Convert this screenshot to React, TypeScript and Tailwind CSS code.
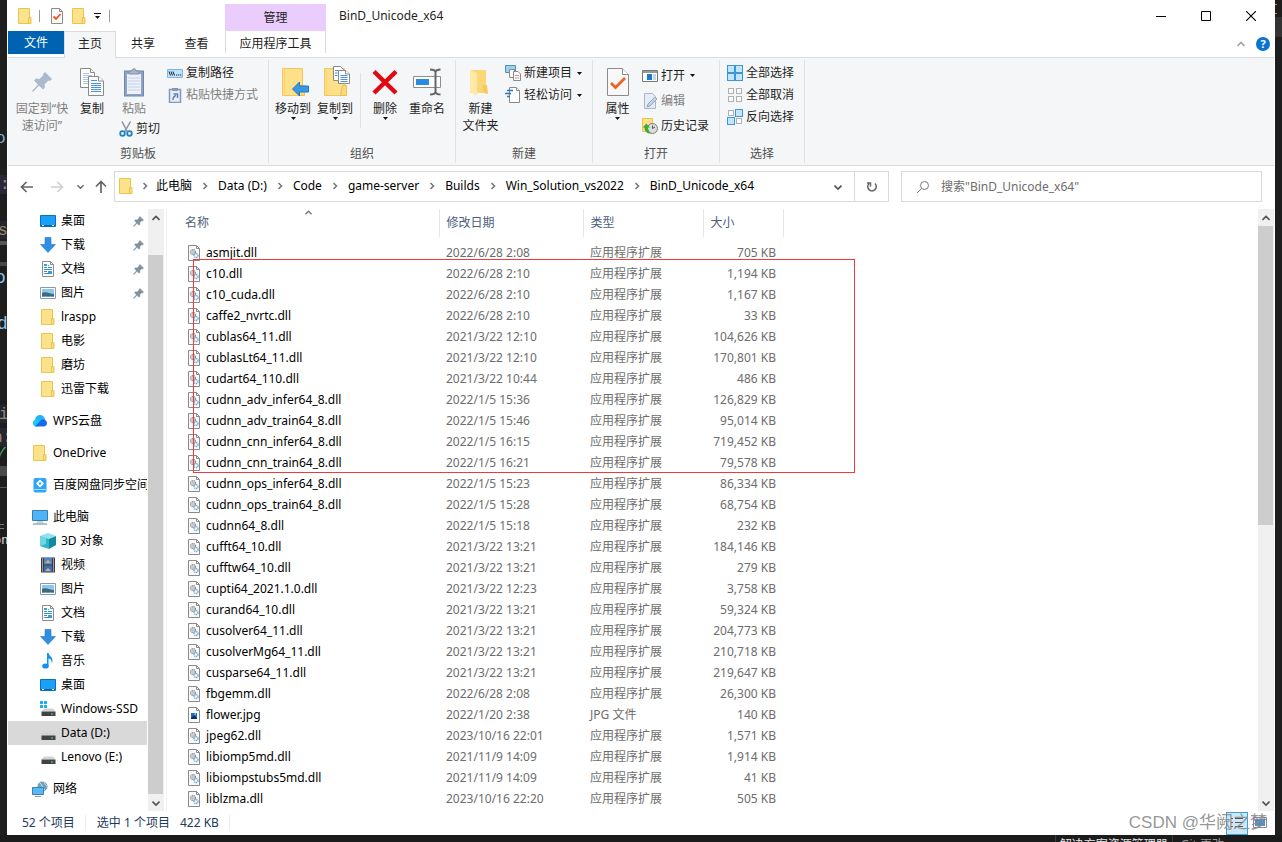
import type { ReactNode } from "react";

type IconProps = { className?: string };

/* ── Icons ────────────────────────────────────────────── */

const Folder = ({ className = "h-4 w-4" }: IconProps) => (
  <svg viewBox="0 0 16 16" className={className}>
    <path d="M1.500.5h11v15h-11z" fill="#fde28c" stroke="#e9c44f" />
    <path d="M11.500 9.500h2.500v6h-3.500l1-1.500z" fill="#fbdc7c" stroke="#e9c44f" />
  </svg>
);

const CheckPage = ({ className = "h-4 w-4" }: IconProps) => (
  <svg viewBox="0 0 16 16" className={className}>
    <path d="M2.500.5h8l3 3v12h-11z" fill="#f9f9f9" stroke="#8c8c8c" />
    <path d="M10.500.5v3h3" fill="none" stroke="#8c8c8c" />
    <path d="M4.500 8.500l2.500 2.500 4.500-5" fill="none" stroke="#e8561e" strokeWidth="1.800" />
  </svg>
);

const Caret = ({ className = "h-[3px] w-[5px]" }: IconProps) => (
  <svg viewBox="0 0 5 3" className={className}><path d="M0 0h5L2.500 3z" fill="#111" /></svg>
);

const Chevron = ({ dir, className = "h-2 w-2 text-[#505050]" }: IconProps & { dir: "up" | "down" | "right" }) => (
  <svg viewBox="0 0 8 8" className={className} fill="none" stroke="currentColor" strokeWidth="1.600">
    {dir === "up" && <path d="M.5 6L4 2.500 7.500 6" />}
    {dir === "down" && <path d="M.5 2.500L4 6l3.500-3.500" />}
    {dir === "right" && <path d="M2.500 1L5.500 4l-3 3" />}
  </svg>
);

const BigPin = () => (
  <svg viewBox="0 0 22 22" className="h-[22px] w-[22px]" fill="#a9bacd">
    <path d="M14 1l7 7-2 2-1.500-.5-4 4 .5 3-2 2-4-4L2 21l-1-1 6-6.500-4-4 2-2 3.500.5 4-4L12 3z" />
  </svg>
);

const SmallPin = () => (
  <svg viewBox="0 0 22 22" className="h-[11px] w-[11px]" fill="#7f909f" stroke="#7f909f">
    <path d="M14 1l7 7-2 2-1.500-.5-4 4 .5 3-2 2-4-4L2 21l-1-1 6-6.500-4-4 2-2 3.500.5 4-4L12 3z" />
  </svg>
);

const CopyIcon = () => (
  <svg viewBox="0 0 26 30" className="h-[30px] w-[26px]" fill="#fff" stroke="#8a8a8a">
    <path d="M1.500 1.500h10l4 4v15h-14z" />
    <path d="M11.500 1.500v4h4" />
    <path d="M4 6.500h6M4 8.500h9M4 10.500h6M4 12.500h5M4 14.500h5M4 16.500h5" stroke="#a9c8ef" />
    <path d="M9.500 9.500h10l5 4.500v14.500h-15z" />
    <path d="M19.500 9.500v4.500h5" />
    <path d="M12 13.500h6M12 16.500h10M12 18.500h10M12 20.500h10M12 22.500h10M12 24.500h10" stroke="#4a8fe6" />
  </svg>
);

const PasteIcon = () => (
  <svg viewBox="0 0 22 30" className="h-[30px] w-[22px]">
    <rect x="1.500" y="4" width="19" height="25" fill="#8ba3c6" stroke="#7088ae" />
    <path d="M4 7h14v20H4z" fill="#edf2f9" />
    <path d="M5 11h12M5 14h12M5 17h12M5 20h12M5 23h12" stroke="#c3d0e2" />
    <path d="M6 7V4h3c0-3 4-3 4 0h3v3z" fill="#a8b6ca" stroke="#8090aa" />
  </svg>
);

const CutIcon = () => (
  <svg viewBox="0 0 14 16" className="h-4 w-[14px]" fill="none">
    <path d="M3 .5L8.500 11M11.500.5L5.500 11" stroke="#8b9099" strokeWidth="1.500" />
    <circle cx="3.500" cy="12.500" r="2.300" stroke="#1c84c6" strokeWidth="1.800" />
    <circle cx="10.500" cy="12.500" r="2.300" stroke="#1c84c6" strokeWidth="1.800" />
  </svg>
);

const PathIcon = () => (
  <svg viewBox="0 0 16 16" className="h-4 w-4">
    <path d="M.5 4.500h15v8H.5z" fill="#bfe2fb" stroke="#7db6de" />
    <path d="M2 6.500l1.500 4M4 6.500l1.500 4M6 6.500l1.500 4" stroke="#222" />
    <path d="M9 10h1.200M11 10h1.200M13 10h1.200" stroke="#222" strokeWidth="1.200" />
  </svg>
);

const PasteShortcut = () => (
  <svg viewBox="0 0 16 16" className="h-4 w-4">
    <path d="M2.500 2.500h11v13h-11z" fill="#e8eef7" stroke="#8298bc" strokeWidth="1.500" />
    <path d="M5 1h6v3H5z" fill="#8298bc" />
    <path d="M6 13c0-3 1-4 3-4.500M6.500 7H10.500v4" fill="none" stroke="#6480ad" strokeWidth="1.500" />
  </svg>
);

const BigFolder = ({ children }: { children?: ReactNode }) => (
  <svg viewBox="-4 1 32 32" className="h-8 w-8 shrink-0">
    <path d="M1.500 3.500h20v27h-20z" fill="#fee08a" stroke="#efc95d" />
    <path d="M3.500 4v26" stroke="#fbd26d" />
    <path d="M19.500 20.500h4v10h-6z" fill="#fbd978" stroke="#e9c152" />
    {children}
  </svg>
);

const MoveTo = () => (
  <BigFolder><path d="M11.500 24l7-7v4h9v6h-9v4z" fill="#3798e4" stroke="#2478bf" /></BigFolder>
);

const CopyTo = () => (
  <BigFolder>
    <g fill="#fff" stroke="#8a8a8a">
      <path d="M10.500 1.500h7l3 3v11h-10z" />
      <path d="M15.500 5.500h7l4 3.500v9.500h-11z" />
      <path d="M22.500 5.500V9h4" />
      <path d="M17.500 10.500h7M17.500 12.500h7M17.500 14.500h7M17.500 16.500h7M12 5.500h3M12 8h2.500M12 10.500h2.500" stroke="#4a8fe6" />
    </g>
  </BigFolder>
);

const DeleteIcon = () => (
  <svg viewBox="0 0 28 28" className="h-7 w-7"><path d="M3 3.500L25 25M25 3.500L3 25" stroke="#e30613" strokeWidth="4.500" /></svg>
);

const RenameIcon = () => (
  <svg viewBox="0 0 28 28" className="h-7 w-7" fill="none">
    <path d="M.5 8.500h27v11H.5z" fill="#fff" stroke="#8f8f8f" />
    <path d="M3 11h13v6H3z" fill="#2b8be0" />
    <path d="M17 1.500c3 0 5 .5 5.500 2.500.500-2 2-2.500 5-2.500M22.500 3.500v21M17 26.500c3 0 5-.5 5.500-2.500.500 2 2 2.500 5 2.500" stroke="#666" strokeWidth="2" />
  </svg>
);

const NewFolder = () => (
  <svg viewBox="2 0 24 30" className="h-[30px] w-6">
    <path d="M3 3h16v23H3z" fill="#fbd775" />
    <path d="M3 3l7 3v23l-7-4z" fill="#ffe9a6" />
    <path d="M15 18h5l1 9-4-1z" fill="#f5c95c" />
  </svg>
);

const NewItem = () => (
  <svg viewBox="0 0 16 16" className="h-4 w-4" fill="#fff" stroke="#8a8a8a">
    <path d="M.5.5h10v7H.5z" fill="#9fd0f2" stroke="#4f92bd" />
    <path d="M4.500 4.500h5v8h-5z" />
    <path d="M8.500 6.500h4.500l2.500 2.500v6.500h-7z" />
    <path d="M10 10.500h4M10 13h4" stroke="#e58a8a" />
  </svg>
);

const EasyAccess = () => (
  <svg viewBox="0 0 16 16" className="h-4 w-4" fill="#fff">
    <path d="M4.500.5h7l3 3v12h-10z" stroke="#8a8a8a" />
    <path d="M11.500.5v3h3" stroke="#8a8a8a" />
    <path d="M2 3.500h6M0 6.500h6M2 9.500h3" stroke="#2a78bd" strokeWidth="1.500" />
  </svg>
);

const Properties = () => (
  <svg viewBox="0 0 22 30" className="h-[30px] w-[22px]">
    <path d="M.5 1.500h15l6 6v21H.5z" fill="#f8f8f8" stroke="#8c8c8c" />
    <path d="M15.500 1.500v6h6" fill="#fff" stroke="#8c8c8c" />
    <path d="M4 16l4.500 4.500L18 11" fill="none" stroke="#f0611d" strokeWidth="2.800" />
  </svg>
);

const OpenIcon = () => (
  <svg viewBox="0 0 16 16" className="h-4 w-4">
    <path d="M.5 2.500h15v11H.5z" fill="#fff" stroke="#777" />
    <path d="M1 4h14" stroke="#999" strokeWidth="2" />
    <path d="M5 6h5v6H5z" fill="#1979ca" />
    <path d="M11 7h3M11 9h3M11 11h3" stroke="#8aaac8" />
  </svg>
);

const EditIcon = () => (
  <svg viewBox="0 0 16 16" className="h-4 w-4">
    <path d="M2.500.5h8l3 3v12h-11z" fill="#e6ecf6" stroke="#a8b6cc" />
    <path d="M5 14l1-3 7-7 2 2-7 7z" fill="#c4d2e6" stroke="#93a8c6" />
  </svg>
);

const HistoryIcon = () => (
  <svg viewBox="0 0 16 16" className="h-4 w-4">
    <path d="M.5.500h10v13H.5z" fill="#fce08a" stroke="#e9c44f" />
    <circle cx="10.500" cy="10.500" r="5" fill="#dcdcdc" stroke="#7d7d7d" />
    <path d="M10.500 7.500v3l2.500-1.500" fill="none" stroke="#555" />
    <path d="M9 15.500c-4 0-6.500-2-6.500-6H.8L4.300 5.500 8 9.500H6c0 2.500 1 4 3 6z" fill="#3faa36" />
  </svg>
);

const SelectIcon = ({ on }: { on: boolean[] }) => (
  <svg viewBox="0 0 16 16" className="h-4 w-4">
    {on.map((lit, i) => (
      <rect
        key={i}
        x={(i % 2) * 8 + (lit ? 0.5 : 1.5)}
        y={Math.floor(i / 2) * 8 + (lit ? 0.5 : 1.5)}
        width={lit ? 7 : 5}
        height={lit ? 7 : 5}
        fill={lit ? "#c5e5fb" : "#fbfbfb"}
        stroke={lit ? "#3a97dd" : "#b0b0b0"}
      />
    ))}
  </svg>
);

const Desktop = () => (
  <svg viewBox="0 0 16 16" className="h-4 w-4">
    <path d="M.5 2.500h15v11H.5z" fill="#1aa0fb" stroke="#0c72b8" />
    <path d="M1 12.500h14" stroke="#0b5f9e" />
    <path d="M2 12.500h2M12 12.500h2" stroke="#fff" />
  </svg>
);

const Download = () => (
  <svg viewBox="0 0 16 16" className="h-4 w-4"><path d="M5 .5h6v7h4.500L8 15.500.5 7.500H5z" fill="#2f8fe4" stroke="#2a79c0" strokeWidth=".6" /></svg>
);

const Document = () => (
  <svg viewBox="0 0 16 16" className="h-4 w-4">
    <path d="M2.500.5h8l3 3v12h-11z" fill="#fff" stroke="#8a8a8a" />
    <path d="M10.500.5v3h3" fill="none" stroke="#8a8a8a" />
    <path d="M4 6.500h3M8 6.500h4M4 8.500h8M4 10.500h3M4 12.500h8M8 4.500h1" stroke="#2c93cf" />
    <path d="M8 10h4v2H8zM4 3h3v2H4z" fill="#3f9fd8" />
  </svg>
);

const Picture = () => (
  <svg viewBox="0 0 16 16" className="h-4 w-4">
    <path d="M.5 2.500h15v11H.5z" fill="#fff" stroke="#8e9aa5" />
    <path d="M2 4h12v8H2z" fill="#8dc6f2" />
    <path d="M2 8c4-2 7 1 12 1v3H2z" fill="#3d6d73" />
    <path d="M2 11h12v1H2z" fill="#5fa3d6" />
  </svg>
);

const Wps = () => (
  <svg viewBox="0 0 16 16" className="h-4 w-4">
    <circle cx="8" cy="7" r="5" fill="#20b6f5" />
    <circle cx="4.500" cy="10" r="3.500" fill="#16cbe8" />
    <path d="M3 13.500L9 7c3-2 6 1 6 3s-1.500 3.500-3.500 3.500z" fill="#1668ee" />
  </svg>
);

const Baidu = () => (
  <svg viewBox="0 0 16 16" className="h-4 w-4">
    <rect x="1.500" y="1" width="13" height="14.500" rx="2" fill="#2fa4fb" />
    <path d="M8 2.500l4 4-4 4-4-4zM8 5L6.500 6.500 8 8l1.500-1.500z" fill="#fff" fillRule="evenodd" />
    <path d="M2 12.500h12" stroke="#a9dcff" />
  </svg>
);

const Computer = () => (
  <svg viewBox="0 0 16 16" className="h-4 w-4">
    <path d="M.5 1.500h15v10H.5z" fill="#4fb4f7" stroke="#3b7fae" />
    <path d="M5 13h6" stroke="#8aa0b0" />
    <path d="M1 15h14" stroke="#7c93a5" strokeWidth="1.200" />
  </svg>
);

const Cube = () => (
  <svg viewBox="0 0 16 16" className="h-4 w-4">
    <path d="M0 3l8-3 8 3-7 3z" fill="#8fe3ec" />
    <path d="M0 3l9 3v10L0 13z" fill="#2bb5c8" />
    <path d="M9 6l7-3v9l-7 4z" fill="#118a9e" />
    <path d="M0 3l6 2v6l-6 2z" fill="#6fd5e0" />
  </svg>
);

const Video = () => (
  <svg viewBox="0 0 16 16" className="h-4 w-4">
    <path d="M1 .5h14v15H1z" fill="#3c3c3c" />
    <path d="M4 1h8v6.500H4z" fill="#4b86d8" />
    <path d="M4 8.500h8V15H4z" fill="#3a6fc6" />
    <path d="M5 6l3-3 3 3zM5 14l3-3 3 3z" fill="#e8b43a" />
    <path d="M2.500 1.500v14M13.500 1.500v14" stroke="#fff" strokeDasharray="1 1" />
  </svg>
);

const Music = () => (
  <svg viewBox="0 0 16 16" className="h-4 w-4" fill="#1492ef">
    <path d="M7 0h1.500c.5 3 4.500 4 4 8-.2 1-.5 1.500-1 2 .5-3-1-4-3-4.500V13H7z" />
    <ellipse cx="5.500" cy="13" rx="3.300" ry="2.600" />
  </svg>
);

const Drive = ({ win }: { win?: boolean }) => (
  <svg viewBox="0 0 16 16" className="h-4 w-4">
    {win && <path d="M0 0h3v3H0zM4 0h3v3H4zM0 4h3v3H0zM4 4h3v3H4z" fill="#17b2ee" />}
    <path d="M4 7.500h9l2.500 3H1.500z" fill="#d3d3d3" />
    <path d="M1.500 10.500h14v4.500h-14z" fill="#3f4347" />
    <path d="M11 13h2" stroke="#4bea63" strokeWidth="1.200" />
  </svg>
);

const Network = () => (
  <svg viewBox="0 0 16 16" className="h-4 w-4">
    <circle cx="10.500" cy="5.500" r="5" fill="#6d9fba" />
    <path d="M8 2c2 1 2 5 5 7M12 1c1 2 2 4 3 4" stroke="#cfe6f2" fill="none" />
    <path d="M.5 6.500h11v7H.5z" fill="#58b8f5" stroke="#3d7fb0" />
    <path d="M3 15.500h6" stroke="#8aa0b0" />
  </svg>
);

const DllIcon = () => (
  <svg viewBox="0 0 13 16" className="h-4 w-[13px]" fill="none">
    <path d="M.5.5h8l3 3v12H.5z" fill="#fafafa" stroke="#8a8a8a" />
    <path d="M8.500.5v3h3" stroke="#8a8a8a" />
    <circle cx="5" cy="7" r="2.300" stroke="#858c93" strokeWidth="1.500" strokeDasharray="1.200 .5" />
    <circle cx="5" cy="7" r=".8" fill="#858c93" />
    <circle cx="8" cy="10.500" r="2" stroke="#7aaed2" strokeWidth="1.500" strokeDasharray="1.200 .5" />
  </svg>
);

const JpgIcon = () => (
  <svg viewBox="0 0 13 16" className="h-4 w-[13px]" fill="none">
    <path d="M.5.5h8l3 3v12H.5z" fill="#fff" stroke="#8a8a8a" />
    <path d="M8.500.5v3h3" stroke="#8a8a8a" />
    <path d="M3 6h6v6H3z" fill="#1a6fc8" />
    <path d="M3 11l3-2.500L9 11v1H3z" fill="#0d2f66" />
    <path d="M6.500 7h1.500" stroke="#fff" />
  </svg>
);

/* ── Data ─────────────────────────────────────────────── */

const DLL = "应用程序扩展";
const files = [
  ["asmjit.dll", "2022/6/28 2:08", DLL, "705 KB"],
  ["c10.dll", "2022/6/28 2:10", DLL, "1,194 KB"],
  ["c10_cuda.dll", "2022/6/28 2:10", DLL, "1,167 KB"],
  ["caffe2_nvrtc.dll", "2022/6/28 2:10", DLL, "33 KB"],
  ["cublas64_11.dll", "2021/3/22 12:10", DLL, "104,626 KB"],
  ["cublasLt64_11.dll", "2021/3/22 12:10", DLL, "170,801 KB"],
  ["cudart64_110.dll", "2021/3/22 10:44", DLL, "486 KB"],
  ["cudnn_adv_infer64_8.dll", "2022/1/5 15:36", DLL, "126,829 KB"],
  ["cudnn_adv_train64_8.dll", "2022/1/5 15:46", DLL, "95,014 KB"],
  ["cudnn_cnn_infer64_8.dll", "2022/1/5 16:15", DLL, "719,452 KB"],
  ["cudnn_cnn_train64_8.dll", "2022/1/5 16:21", DLL, "79,578 KB"],
  ["cudnn_ops_infer64_8.dll", "2022/1/5 15:23", DLL, "86,334 KB"],
  ["cudnn_ops_train64_8.dll", "2022/1/5 15:28", DLL, "68,754 KB"],
  ["cudnn64_8.dll", "2022/1/5 15:18", DLL, "232 KB"],
  ["cufft64_10.dll", "2021/3/22 13:21", DLL, "184,146 KB"],
  ["cufftw64_10.dll", "2021/3/22 13:21", DLL, "279 KB"],
  ["cupti64_2021.1.0.dll", "2021/3/22 12:23", DLL, "3,758 KB"],
  ["curand64_10.dll", "2021/3/22 13:21", DLL, "59,324 KB"],
  ["cusolver64_11.dll", "2021/3/22 13:21", DLL, "204,773 KB"],
  ["cusolverMg64_11.dll", "2021/3/22 13:21", DLL, "210,718 KB"],
  ["cusparse64_11.dll", "2021/3/22 13:21", DLL, "219,647 KB"],
  ["fbgemm.dll", "2022/6/28 2:08", DLL, "26,300 KB"],
  ["flower.jpg", "2022/1/20 2:38", "JPG 文件", "140 KB"],
  ["jpeg62.dll", "2023/10/16 22:01", DLL, "1,571 KB"],
  ["libiomp5md.dll", "2021/11/9 14:09", DLL, "1,914 KB"],
  ["libiompstubs5md.dll", "2021/11/9 14:09", DLL, "41 KB"],
  ["liblzma.dll", "2023/10/16 22:20", DLL, "505 KB"],
];

type NavItem = { label: string; icon: ReactNode; root?: boolean; pinned?: boolean; active?: boolean };

const navGroups: NavItem[][] = [
  [
    { label: "桌面", icon: <Desktop />, pinned: true },
    { label: "下载", icon: <Download />, pinned: true },
    { label: "文档", icon: <Document />, pinned: true },
    { label: "图片", icon: <Picture />, pinned: true },
    { label: "lraspp", icon: <Folder /> },
    { label: "电影", icon: <Folder /> },
    { label: "磨坊", icon: <Folder /> },
    { label: "迅雷下载", icon: <Folder /> },
  ],
  [{ label: "WPS云盘", icon: <Wps />, root: true }],
  [{ label: "OneDrive", icon: <Folder />, root: true }],
  [{ label: "百度网盘同步空间", icon: <Baidu />, root: true }],
  [
    { label: "此电脑", icon: <Computer />, root: true },
    { label: "3D 对象", icon: <Cube /> },
    { label: "视频", icon: <Video /> },
    { label: "图片", icon: <Picture /> },
    { label: "文档", icon: <Document /> },
    { label: "下载", icon: <Download /> },
    { label: "音乐", icon: <Music /> },
    { label: "桌面", icon: <Desktop /> },
    { label: "Windows-SSD", icon: <Drive win /> },
    { label: "Data (D:)", icon: <Drive />, active: true },
    { label: "Lenovo (E:)", icon: <Drive /> },
  ],
  [{ label: "网络", icon: <Network />, root: true }],
];

const crumbs = ["此电脑", "Data (D:)", "Code", "game-server", "Builds", "Win_Solution_vs2022", "BinD_Unicode_x64"];

/* ── Ribbon pieces ────────────────────────────────────── */

function BigButton({ icon, lines, caret, disabled, width }: { icon: ReactNode; lines: string[]; caret?: boolean; disabled?: boolean; width: string }) {
  return (
    <button disabled={disabled} className={`flex shrink-0 flex-col items-center ${width} ${disabled ? "text-[#7f7f7f]" : ""}`}>
      <span className="flex h-9 items-center">{icon}</span>
      {lines.map((l) => <span key={l} className="leading-[17px] whitespace-nowrap">{l}</span>)}
      {caret && <Caret />}
    </button>
  );
}

function SmallButton({ icon, label, caret, disabled, height = "h-[22px]" }: { icon: ReactNode; label: string; caret?: boolean; disabled?: boolean; height?: string }) {
  return (
    <button disabled={disabled} className={`flex items-center gap-[3px] whitespace-nowrap ${height} ${disabled ? "text-[#7f7f7f]" : ""}`}>
      {icon}
      <span>{label}</span>
      {caret && <span className="pl-[2px]"><Caret /></span>}
    </button>
  );
}

function RibbonGroup({ label, width, children }: { label: string; width: string; children: ReactNode }) {
  return (
    <section className={`flex shrink-0 flex-col py-[2px] ${width}`}>
      <div className="flex flex-1 flex-col border-r border-[#dfe1e3]">
        <div className="flex h-[85px] items-start pt-1">{children}</div>
        <h2 className="text-center leading-[18px] text-[#505050]">{label}</h2>
      </div>
    </section>
  );
}

function ScrollBar({ before, thumb }: { before: string; thumb: string }) {
  return (
    <div className="flex w-4 shrink-0 flex-col bg-[#f0f0f0]">
      <button aria-label="向上滚动" className="flex h-[17px] items-center justify-center pr-px"><Chevron dir="up" /></button>
      <div className={before} />
      <div className={`mr-px bg-[#cdcdcd] ${thumb}`} />
      <div className="flex-1" />
      <button aria-label="向下滚动" className="flex h-[17px] items-center justify-center pr-px"><Chevron dir="down" /></button>
    </div>
  );
}

/* Editor window that shows around the edges of the explorer */
function Backdrop() {
  return (
    <div className="absolute inset-0 overflow-hidden bg-[#1e1e1e] font-['Liberation_Mono','Noto_Sans_CJK_SC',monospace] text-base leading-5">
      <span className="absolute top-[129px] left-[-4px] text-[#7fb4d8]">or</span>
      <span className="absolute top-[175px] left-0 h-[19px] w-2 bg-[#2a2838] text-[#a08a78]">:</span>
      <span className="absolute top-[221px] left-[-2px] h-[18px] w-4 bg-[#262631] text-[#948a6d]">s</span>
      <span className="absolute top-[241px] left-0 h-1 w-2 bg-[#555]" />
      <span className="absolute top-[262px] left-0 h-1 w-2 bg-[#484848]" />
      <span className="absolute top-[264px] left-[-5px] text-lg text-[#89c3e8]">ob</span>
      <span className="absolute top-[310px] left-[-3px] text-lg text-[#89c3e8]">d</span>
      <span className="absolute top-[405px] left-[-1px] h-[18px] w-4 bg-[#262631] text-[#948a6d]">i</span>
      <span className="absolute top-[428px] left-[-7px] h-[18px] w-6 bg-[#262631] text-[#948a6d]">n:</span>
      <span className="absolute top-[445px] left-[-5px] text-[#3fa36a]">✓</span>
      <span className="absolute top-[466px] left-0 h-[10px] w-2 bg-[#4a4a4a]" />
      <span className="absolute top-[487px] left-0 h-px w-2 bg-[#555]" />
      <span className="absolute top-[524px] left-0 h-px w-1 bg-[#777]" />
      <span className="absolute top-[528px] left-0 h-px w-1 bg-[#777]" />
      <span className="absolute top-[533px] left-[-6px] text-xs text-[#e0e0e0]">on</span>
      <span className="absolute top-[17px] right-0 h-5 w-[7px] bg-[#333]" />
      <span className="absolute top-1 right-[5px] h-[10px] w-[2px] border-y border-[#d08a3a]" />
    </div>
  );
}

export default function App() {
  return (
    <div className="relative flex min-h-screen flex-col font-['Noto_Sans','Noto_Sans_CJK_SC',sans-serif] text-xs text-[#1e1e1e]">
      <Backdrop />

      <div className="relative mx-[7px] flex flex-1 flex-col bg-white px-px">

        {/* Title bar */}
        <header className="flex h-[31px] items-center">
          <div className="flex w-[217px] items-center pl-[9px]">
            <Folder />
            <span className="ml-[6px] h-3 w-px bg-[#9a9a9a]" />
            <button aria-label="属性" className="ml-[9px]"><CheckPage /></button>
            <button aria-label="新建文件夹" className="ml-[6px]"><Folder /></button>
            <button aria-label="自定义快速访问工具栏" className="ml-1 flex h-3 w-3 flex-col items-center justify-center gap-[2px]">
              <span className="h-px w-[7px] bg-black" /><Caret />
            </button>
            <span className="ml-[6px] h-3 w-px bg-[#9a9a9a]" />
          </div>
          <div className="flex h-[27px] w-[101px] items-center justify-center self-end bg-[#eaccfd]">管理</div>
          <h1 className="flex-1 pl-[13px]">BinD_Unicode_x64</h1>
          <div className="flex pr-px text-black">
            <button aria-label="最小化" className="flex h-[31px] w-[45px] items-center justify-center">
              <svg viewBox="0 0 10 10" className="h-[10px] w-[10px]"><path d="M0 5.500h10" stroke="currentColor" /></svg>
            </button>
            <button aria-label="最大化" className="flex h-[31px] w-[45px] items-center justify-center">
              <svg viewBox="0 0 10 10" className="h-[10px] w-[10px]"><path d="M.5.5h9v9h-9z" fill="none" stroke="currentColor" /></svg>
            </button>
            <button aria-label="关闭" className="flex h-[31px] w-[45px] items-center justify-center">
              <svg viewBox="0 0 10 10" className="h-[10px] w-[10px]"><path d="M0 0l10 10M10 0L0 10" stroke="currentColor" strokeWidth="1.100" /></svg>
            </button>
          </div>
        </header>

        {/* Tabs */}
        <nav className="flex h-[27px] border-b border-[#dadbdc]">
          <button className="h-[23px] w-14 bg-[#0063b1] text-white">文件</button>
          <button className="-mb-px w-[52px] border-x border-t border-[#dadbdc] bg-[#f5f6f7] pb-[3px]">主页</button>
          <button className="w-[54px]">共享</button>
          <button className="mr-[2px] w-[53px]">查看</button>
          <button className="mb-1 w-[101px] border-x border-[#dcd6e0] pt-1">应用程序工具</button>
          <div className="flex flex-1 items-center justify-end gap-[11px] pr-1">
            <button aria-label="最小化功能区"><Chevron dir="up" className="h-2 w-2 text-[#a5a5a5]" /></button>
            <button aria-label="帮助" className="flex h-[14px] w-[14px] items-center justify-center rounded-full bg-[#0a73cf] text-[11px] font-bold text-white">?</button>
          </div>
        </nav>

        {/* Ribbon */}
        <div className="flex h-[108px] border-b border-[#dadbdc] bg-[#f5f6f7]">
          <RibbonGroup label="剪贴板" width="w-[261px]">
            <BigButton icon={<BigPin />} lines={["固定到“快", "速访问”"]} disabled width="w-[68px]" />
            <BigButton icon={<CopyIcon />} lines={["复制"]} width="w-8" />
            <div className="flex w-[59px] flex-col pl-[3px]">
              <BigButton icon={<PasteIcon />} lines={["粘贴"]} disabled width="w-[46px]" />
              <div className="pl-2"><SmallButton icon={<CutIcon />} label="剪切" height="h-6" /></div>
            </div>
            <div className="-mt-[2px]">
              <SmallButton icon={<PathIcon />} label="复制路径" />
              <SmallButton icon={<PasteShortcut />} label="粘贴快捷方式" disabled />
            </div>
          </RibbonGroup>

          <RibbonGroup label="组织" width="w-[187px]">
            <div className="w-[3px]" />
            <BigButton icon={<MoveTo />} lines={["移动到"]} caret width="w-[42px]" />
            <BigButton icon={<CopyTo />} lines={["复制到"]} caret width="w-[42px]" />
            <div className="mr-[3px] ml-1 mt-[9px] h-[55px] w-px bg-[#dfe1e3]" />
            <BigButton icon={<DeleteIcon />} lines={["删除"]} caret width="w-[42px]" />
            <BigButton icon={<RenameIcon />} lines={["重命名"]} width="w-[42px]" />
          </RibbonGroup>

          <RibbonGroup label="新建" width="w-[137px]">
            <BigButton icon={<NewFolder />} lines={["新建", "文件夹"]} width="w-[49px]" />
            <div className="-mt-[2px]">
              <SmallButton icon={<NewItem />} label="新建项目" caret />
              <SmallButton icon={<EasyAccess />} label="轻松访问" caret />
            </div>
          </RibbonGroup>

          <RibbonGroup label="打开" width="w-[127px]">
            <BigButton icon={<Properties />} lines={["属性"]} caret width="w-[49px]" />
            <div className="-mt-px">
              <SmallButton icon={<OpenIcon />} label="打开" caret height="h-[25px]" />
              <SmallButton icon={<EditIcon />} label="编辑" disabled height="h-[25px]" />
              <SmallButton icon={<HistoryIcon />} label="历史记录" height="h-[25px]" />
            </div>
          </RibbonGroup>

          <RibbonGroup label="选择" width="w-[85px]">
            <div className="-mt-[2px] pl-[7px]">
              <SmallButton icon={<SelectIcon on={[true, true, true, true]} />} label="全部选择" />
              <SmallButton icon={<SelectIcon on={[false, false, false, false]} />} label="全部取消" />
              <SmallButton icon={<SelectIcon on={[false, true, true, false]} />} label="反向选择" />
            </div>
          </RibbonGroup>
        </div>

        {/* Address bar */}
        <div className="flex items-center pt-[5px] pr-3 pb-[7px] pl-3">
          <div className="flex w-[94px] items-center text-[#666]">
            <button aria-label="后退">
              <svg viewBox="0 0 14 14" className="h-[14px] w-[14px]" fill="none" stroke="currentColor" strokeWidth="1.700"><path d="M6.500 2L1.500 7l5 5M1.500 7H13" /></svg>
            </button>
            <button aria-label="前进" disabled className="ml-4 text-[#d0d0d0]">
              <svg viewBox="0 0 14 14" className="h-[14px] w-[14px]" fill="none" stroke="currentColor" strokeWidth="1.700"><path d="M7.500 2l5 5-5 5M12.500 7H1" /></svg>
            </button>
            <button aria-label="最近位置" className="ml-[13px]"><Chevron dir="down" className="h-[7px] w-[7px]" /></button>
            <button aria-label="上移" className="ml-[10px]">
              <svg viewBox="0 0 14 14" className="h-[14px] w-[14px]" fill="none" stroke="currentColor" strokeWidth="1.700"><path d="M2 6.500l5-5 5 5M7 1.500V13" /></svg>
            </button>
          </div>
          <div className="flex h-[31px] flex-1 items-center border border-[#d9d9d9]">
            <div className="flex flex-1 items-center pb-px pl-[3px] whitespace-nowrap text-black">
              <Folder />
              {crumbs.map((c, i) => (
                <span key={c} className="flex items-center">
                  <span className={`flex justify-center ${i === 0 ? "w-[22px]" : "w-[26px]"}`}>
                    <Chevron dir="right" className="h-2 w-2 text-[#777]" />
                  </span>
                  <a href="#">{c}</a>
                </span>
              ))}
            </div>
            <button aria-label="历史地址" className="px-3"><Chevron dir="down" /></button>
            <button aria-label="刷新" className="flex h-full w-[34px] items-center justify-center border-l border-[#d9d9d9] text-[#666]">
              <svg viewBox="0 0 12 12" className="h-3 w-3" fill="none" stroke="currentColor" strokeWidth="1.500"><path d="M3 2.500a4.300 4.300 0 1 0 6 0M1 2h3.500v3.500" /></svg>
            </button>
          </div>
          <label className="ml-3 flex h-[31px] w-[361px] items-center gap-[11px] border border-[#d9d9d9] pl-[14px]">
            <svg viewBox="0 0 14 14" className="h-[14px] w-[14px]" fill="none" stroke="#7a7a7a"><circle cx="8.500" cy="5.500" r="4" /><path d="M5.500 8.500L1 13" /></svg>
            <input aria-label="搜索" placeholder={'搜索"BinD_Unicode_x64"'} className="min-w-0 flex-1 outline-none placeholder:text-[#6d6d6d]" />
          </label>
        </div>

        {/* Panes */}
        <main className="flex flex-1">
          <nav className="flex w-[140px] shrink-0 flex-col gap-2 overflow-hidden pb-[10px] text-black">
            {navGroups.map((group, i) => (
              <ul key={i}>
                {group.map((item) => (
                  <li key={item.label} className={`mr-px ${item.active ? "bg-[#d9d9d9]" : ""}`}>
                    <a href="#" className={`flex h-6 items-center gap-[5px] overflow-hidden whitespace-nowrap ${item.root ? "pl-6" : "pl-8"}`}>
                      <span className="shrink-0">{item.icon}</span>
                      <span className="flex-1">{item.label}</span>
                      {item.pinned && <span className="pr-[3px]"><SmallPin /></span>}
                    </a>
                  </li>
                ))}
              </ul>
            ))}
          </nav>
          <ScrollBar before="h-[29px]" thumb="h-[539px]" />

          <div className="ml-[2px] flex-1 border-l border-[#f0f0f0] pl-3">
            <div className="relative w-[604px]">
              <table className="w-full table-fixed">
                <thead className="text-[#4c607a]">
                  <tr className="h-7 text-left">
                    <th className="relative w-[260px] border-r border-[#e5e5e5] pl-[6px] font-normal">
                      名称
                      <span className="absolute inset-x-0 top-0 flex justify-center"><Chevron dir="up" className="h-[7px] w-[9px] text-[#777]" /></span>
                    </th>
                    <th className="w-36 border-r border-[#e5e5e5] pl-[7px] font-normal">修改日期</th>
                    <th className="w-[120px] border-r border-[#e5e5e5] pl-[7px] font-normal">类型</th>
                    <th className="w-20 border-r border-[#e5e5e5] pl-[7px] font-normal">大小</th>
                  </tr>
                </thead>
                <tbody className="text-[#6d6d6d] before:block before:h-[5px]">
                  {files.map(([name, date, type, size]) => (
                    <tr key={name} className="h-[21px] whitespace-nowrap">
                      <td className="pl-[9px] text-black">
                        <span className="flex items-center gap-[5px]">
                          {name.endsWith(".jpg") ? <JpgIcon /> : <DllIcon />}
                          {name}
                        </span>
                      </td>
                      <td className="pl-[7px]">{date}</td>
                      <td className="pl-[7px]">{type}</td>
                      <td className="pr-[7px] text-right">{size}</td>
                    </tr>
                  ))}
                </tbody>
              </table>
              <div className="pointer-events-none absolute top-[50px] left-[14px] h-[214px] w-[662px] border border-[#f03a3a]" />
            </div>
          </div>
          <ScrollBar before="h-0" thumb="h-[299px]" />
        </main>

        {/* Status bar */}
        <footer className="relative flex h-6 items-center pl-[14px] whitespace-nowrap text-[#1e395b]">
          <span className="border-r border-[#ececec] pr-[10px]">52 个项目</span>
          <span className="pl-[11px]">选中 1 个项目</span>
          <span className="border-r border-[#ececec] pr-[10px] pl-[10px]">422 KB</span>
          <div className="ml-auto flex items-center gap-1 pr-[6px]">
            <button aria-label="详细信息" className="flex h-[23px] w-[22px] items-center justify-center border border-[#3aa0d8] bg-[#cbe8f8]">
              <svg viewBox="0 0 14 14" className="h-[14px] w-[14px]"><path d="M1 2.500h2M1 6.500h2M1 10.500h2" stroke="#c33" /><path d="M5 2.500h8M5 6.500h8M5 10.500h8" stroke="#555" /></svg>
            </button>
            <button aria-label="大图标">
              <svg viewBox="0 0 16 12" className="h-3 w-4"><path d="M1.500.5h13v10h-13z" fill="#fff" stroke="#889" /><path d="M3 2h10v7H3z" fill="#4c8fc9" /></svg>
            </button>
          </div>
          <span className="pointer-events-none absolute right-[7px] font-['Liberation_Sans','Noto_Sans_CJK_SC',sans-serif] text-[17px] leading-6 text-[#8a8a8a]/90">CSDN @华阙之梦</span>
        </footer>
      </div>

      {/* Editor tool tabs below the window */}
      <div className="relative flex h-[7px] justify-end overflow-hidden bg-[#1b1b1c] pr-[58px] leading-4 text-[#e8e8e8]">
        <span className="border-l border-[#3a3a3c] px-1 pt-[2px]">解决方案资源管理器</span>
        <span className="border-l border-[#3a3a3c] pt-[2px] pl-2 text-[#9a9a9a]">Git 更改</span>
      </div>
    </div>
  );
}
